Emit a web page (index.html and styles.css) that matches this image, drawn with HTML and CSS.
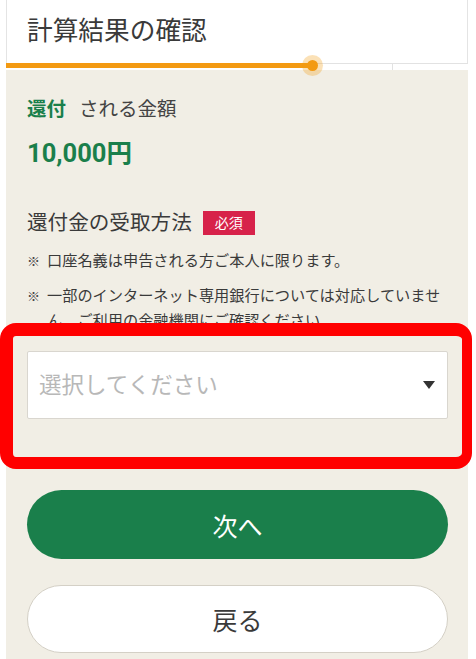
FILE: index.html
```html
<!DOCTYPE html>
<html lang="ja">
<head>
<meta charset="utf-8">
<title>計算結果の確認</title>
<link rel="stylesheet" href="styles.css">
</head>
<body>
<div class="page">
  <header class="head">
    <h1 class="title">計算結果の確認</h1>
  </header>
  <div class="progress">
    <div class="progress-fill"><span class="progress-dot"></span></div>
    <span class="progress-tick"></span>
  </div>
  <main class="panel">
    <p class="amount-label"><span class="accent">還付</span><span class="label-rest">される金額</span></p>
    <p class="amount">10,000円</p>
    <h2 class="section-title">還付金の受取方法<span class="badge">必須</span></h2>
    <ul class="notes">
      <li class="note"><span class="mark">※</span><span>口座名義は申告される方ご本人に限ります。</span></li>
      <li class="note"><span class="mark">※</span><span>一部のインターネット専用銀行については対応していません。ご利用の金融機関にご確認ください。</span></li>
    </ul>
    <div class="select">
      <span class="placeholder">選択してください</span>
      <svg class="caret" width="12" height="8" viewBox="0 0 12 8"><path d="M0 0H12L6 8Z" fill="#333"/></svg>
    </div>
    <button class="btn btn-primary" type="button">次へ</button>
    <button class="btn btn-secondary" type="button">戻る</button>
  </main>
  <div class="highlight"></div>
</div>
</body>
</html>
```
FILE: styles.css
```css
* { box-sizing: border-box; }
html, body { margin: 0; padding: 0; background: #fff; }
body {
  font-family: Roboto, "Noto Sans CJK JP", sans-serif;
  color: #333;
  width: 476px;
  height: 659px;
  overflow: hidden;
}
.page {
  position: relative;
  padding-left: 6px;
  width: 468px;
}
.head {
  height: 63px;
  background: #fff;
  border: 1px solid #e4e4e4;
  border-top: none;
  border-bottom: none;
  padding-left: 20px;
  display: flex;
  align-items: center;
}
.title {
  margin: 0;
  font-size: 25.7px;
  font-weight: 400;
  color: #3a3a3a;
  line-height: 1;
}
.progress {
  position: relative;
  height: 7px;
  background: #fff;
  border-top: 1px solid #e2e2e2;
}
.progress-fill {
  position: absolute;
  left: 0;
  top: -1px;
  width: 307px;
  height: 5px;
  background: #f39a12;
}
.progress-dot {
  position: absolute;
  right: -5px;
  top: -3px;
  width: 11px;
  height: 11px;
  border-radius: 50%;
  background: #f39a12;
  box-shadow: 0 0 0 5px rgba(243, 154, 18, 0.3);
}
.progress-tick {
  position: absolute;
  left: 386px;
  top: 0;
  width: 1px;
  height: 6px;
  background: #e2e2e2;
}
.panel {
  background: #f1eee5;
  padding: 26px 20px 10px 21px;
  display: flex;
  flex-direction: column;
  height: 589px;
}
.panel p, .panel h2, .panel ul { margin: 0; }
.amount-label {
  font-size: 19.5px;
  line-height: 28px;
  color: #444;
}
.accent { color: #1a7f4b; font-weight: 700; }
.label-rest { margin-left: 13px; }
.amount {
  margin-top: 13px !important;
  font-size: 25.5px;
  line-height: 32px;
  font-weight: 700;
  color: #1a7f4b;
}
.section-title {
  margin-top: 39px !important;
  font-size: 20.6px;
  font-weight: 400;
  line-height: 30px;
  color: #3a3a3a;
  display: flex;
  align-items: center;
}
.badge {
  margin-left: 11px;
  width: 52px;
  height: 24px;
  background: #d7224a;
  color: #fff;
  font-size: 14px;
  display: inline-flex;
  align-items: center;
  justify-content: center;
  line-height: 1;
}
.notes {
  list-style: none;
  padding: 0 4px 0 0;
  margin-top: 11px !important;
  display: flex;
  flex-direction: column;
  gap: 10px;
}
.note {
  display: flex;
  font-size: 15.2px;
  line-height: 25px;
  color: #3a3a3a;
}
.mark {
  flex: 0 0 20px;
  font-size: 13px;
  color: #444;
}
.select {
  margin-top: 17px;
  height: 68px;
  background: #fff;
  border: 1px solid #d9d6cf;
  border-radius: 2px;
  display: flex;
  align-items: center;
  justify-content: space-between;
  padding: 0 12px 0 11px;
  flex-shrink: 0;
}
.placeholder {
  font-size: 22.5px;
  color: #b8b8b8;
  line-height: 1;
}
.btn {
  display: flex;
  align-items: center;
  justify-content: center;
  width: 100%;
  height: 69px;
  border-radius: 35px;
  font-family: Roboto, "Noto Sans CJK JP", sans-serif;
  font-size: 25px;
  flex-shrink: 0;
  padding: 0;
}
.btn-primary {
  margin-top: 71px;
  background: #1a7f4b;
  color: #fff;
  border: none;
}
.btn-secondary {
  margin-top: 26px;
  height: 68px;
  background: #fff;
  color: #3a3a3a;
  border: 1px solid #d4d0c6;
}
.highlight {
  position: absolute;
  left: 0;
  top: 323px;
  width: 472px;
  height: 146px;
  border: 13px solid #ff0000;
  border-right-width: 10px;
  border-bottom-width: 12px;
  border-radius: 16px;
  pointer-events: none;
}
```
